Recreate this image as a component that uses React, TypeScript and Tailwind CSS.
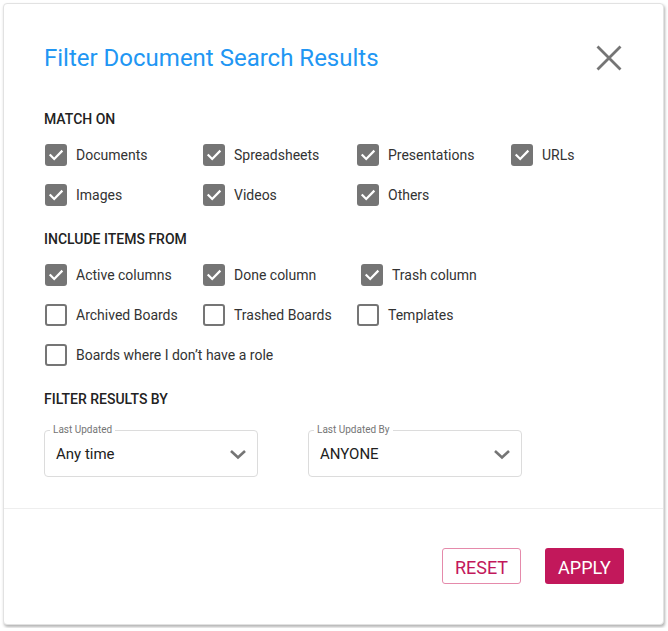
import { useState } from "react"

interface Option {
  label: string
  checked: boolean
  shift?: boolean
}

function CheckBox({ checked, onClick }: { checked: boolean; onClick: () => void }) {
  return (
    <button
      onClick={onClick}
      className={`w-[22px] h-[22px] rounded-[3px] flex items-center justify-center flex-shrink-0 ${
        checked ? "bg-[#757575]" : "bg-white border-2 border-[#757575]"
      }`}
    >
      {checked && (
        <svg width="16" height="16" viewBox="0 0 16 16" fill="none">
          <path d="M2.5 8.3 L6.2 12 L13.6 4.4" stroke="white" strokeWidth="2.2" strokeLinecap="square" />
        </svg>
      )}
    </button>
  )
}

function OptionGrid({ items, setItems }: { items: Option[]; setItems: (o: Option[]) => void }) {
  return (
    <div className="grid grid-cols-[158px_154px_154px_154px] ml-px">
      {items.map((item, i) =>
        item.label === "" ? (
          <div key={"empty" + i} />
        ) : (
          <div key={item.label} className={`h-10 flex items-center gap-[9px] ${item.shift ? "pl-1" : ""}`}>
            <CheckBox
              checked={item.checked}
              onClick={() => setItems(items.map((o, j) => (j === i ? { ...o, checked: !o.checked } : o)))}
            />
            <span className="text-[14px] text-[#333] pt-px whitespace-nowrap">{item.label}</span>
          </div>
        )
      )}
    </div>
  )
}

function Dropdown({ label, value }: { label: string; value: string }) {
  return (
    <div className="relative w-[214px] h-[47px] border border-[#dcdcdc] rounded-[4px] flex items-center justify-between pl-[11px] pr-[10px]">
      <span className="absolute -top-[8px] left-[5px] bg-white px-[3px] text-[10px] leading-[14px] text-[#757575]">
        {label}
      </span>
      <span className="text-[15px] text-[#212121] pt-px">{value}</span>
      <svg width="18" height="12" viewBox="0 0 18 12" fill="none">
        <path d="M2 3 L9 9.5 L16 3" stroke="#757575" strokeWidth="2.6" />
      </svg>
    </div>
  )
}

export default function App() {
  const [matchOn, setMatchOn] = useState<Option[]>([
    { label: "Documents", checked: true },
    { label: "Spreadsheets", checked: true },
    { label: "Presentations", checked: true },
    { label: "URLs", checked: true },
    { label: "Images", checked: true },
    { label: "Videos", checked: true },
    { label: "Others", checked: true },
  ])
  const [include, setInclude] = useState<Option[]>([
    { label: "Active columns", checked: true },
    { label: "Done column", checked: true },
    { label: "Trash column", checked: true, shift: true },
    { label: "", checked: false },
    { label: "Archived Boards", checked: false },
    { label: "Trashed Boards", checked: false },
    { label: "Templates", checked: false },
  ])
  const [extra, setExtra] = useState(false)

  return (
    <div className="p-[3px] bg-white font-['Roboto',sans-serif]">
      <div className="w-[661px] h-[622px] bg-white rounded-[4px] border border-[#e2e2e2] shadow-[1px_2px_3px_rgba(0,0,0,0.3)] flex flex-col">
        {/* Header */}
        <div className="flex items-center justify-between pt-[40px] pl-[40px] pr-[40px]">
          <h1 className="text-[24px] leading-[28px] text-[#2196f3]">Filter Document Search Results</h1>
          <button className="w-[28px] h-[28px] flex items-center justify-center">
            <svg width="26" height="26" viewBox="0 0 26 26" fill="none">
              <path d="M1.5 1.5 L24.5 24.5 M24.5 1.5 L1.5 24.5" stroke="#757575" strokeWidth="2.8" />
            </svg>
          </button>
        </div>

        <div className="pl-[40px] pr-[40px]">
          <h2 className="mt-[39px] text-[14px] leading-4 font-medium text-[#222]">MATCH ON</h2>
          <div className="mt-2">
            <OptionGrid items={matchOn} setItems={setMatchOn} />
          </div>

          <h2 className="mt-4 text-[14px] leading-4 font-medium text-[#222]">INCLUDE ITEMS FROM</h2>
          <div className="mt-2">
            <OptionGrid items={include} setItems={setInclude} />
            <div className="h-10 flex items-center gap-[9px] ml-px">
              <CheckBox checked={extra} onClick={() => setExtra(!extra)} />
              <span className="text-[14px] text-[#333] pt-px">Boards where I don’t have a role</span>
            </div>
          </div>

          <h2 className="mt-4 text-[14px] leading-4 font-medium text-[#222]">FILTER RESULTS BY</h2>
          <div className="mt-[23px] flex gap-[50px]">
            <Dropdown label="Last Updated" value="Any time" />
            <Dropdown label="Last Updated By" value="ANYONE" />
          </div>
        </div>

        <div className="mt-[31px] h-px bg-[#eeeeee]" />

        <div className="mt-[39px] flex justify-end gap-6 pr-[39px]">
          <button className="w-[79px] h-[36px] rounded-[3px] border border-[#e58aab] text-[#c2185b] text-[18px] pt-0.5">
            RESET
          </button>
          <button className="w-[79px] h-[36px] rounded-[3px] bg-[#c2185b] text-white text-[18px] pt-0.5">APPLY</button>
        </div>
      </div>
    </div>
  )
}
